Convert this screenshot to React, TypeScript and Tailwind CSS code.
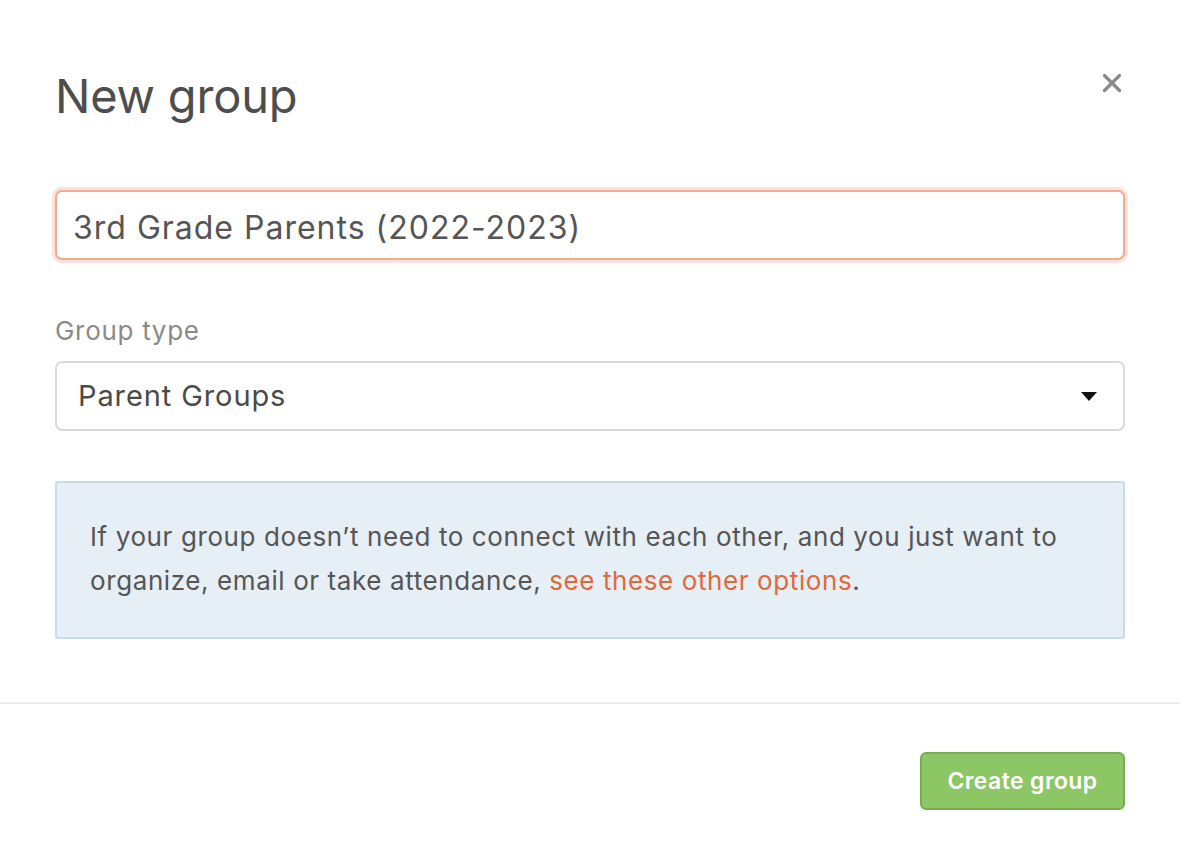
import { X } from "lucide-react";

export default function App() {
  return (
    <div className="min-h-[856px] w-full bg-white text-[#555] [font-family:Inter,'Noto_Sans',sans-serif]">
      <div className="px-[55px] pt-[66px]">
        <div className="flex items-start justify-between">
          <h1 className="text-[47px] leading-[60px] font-normal text-[#4d4d4d] tracking-[-0.2px]">New group</h1>
          <button className="mt-[2px] -mr-[2px] text-[#8a8a8a]">
            <X size={30} strokeWidth={2.6} />
          </button>
        </div>

        <div className="mt-[61px] -mx-[3px] rounded-[10px] p-[3px] bg-[#fbe1d8]">
          <div className="flex h-[70px] items-center rounded-[7px] border-2 border-[#f0ab92] bg-white px-[16px] pt-[6px] text-[32px] tracking-[1px] text-[#555]">
            3rd Grade Parents (2022-2023)
          </div>
        </div>

        <div className="mt-[52px] text-[26px] leading-[32px] tracking-[0.7px] text-[#8a8a8a]">Group type</div>
        <div className="mt-[14px] flex h-[70px] items-center justify-between rounded-[7px] border-2 border-[#dadada] px-[21px] text-[29px] tracking-[0.9px] text-[#4a4a4a]">
          <span>Parent Groups</span>
          <svg width="16" height="9" viewBox="0 0 16 9" className="mr-[5px]">
            <path d="M0 0 L16 0 L8 9 Z" fill="#111" />
          </svg>
        </div>

        <div className="mt-[50px] rounded-[3px] border-2 border-[#c7dbeb] bg-[#e6eef6] px-[33px] pt-[32px] pb-[34px] text-[26px] leading-[44px] tracking-[0.6px] text-[#555]">
          If your group doesn’t need to connect with each other, and you just want to organize, email or take attendance,{" "}
          <a className="text-[#e0693a]">see these other options</a>.
        </div>
      </div>

      <div className="mt-[63px] h-[2px] bg-[#ebebeb]" />

      <div className="flex justify-end px-[55px] pt-[48px]">
        <button className="h-[58px] w-[205px] rounded-[6px] border-2 border-[#76ad53] bg-[#8cc665] text-[23px] font-semibold tracking-[0.4px] text-white">
          Create group
        </button>
      </div>
    </div>
  );
}
